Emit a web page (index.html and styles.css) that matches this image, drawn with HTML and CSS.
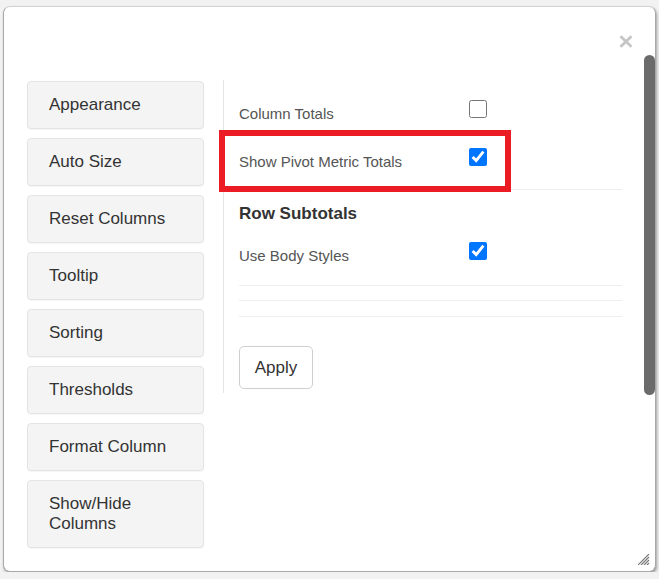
FILE: index.html
```html
<!DOCTYPE html>
<html>
<head>
<meta charset="utf-8">
<link rel="stylesheet" href="styles.css">
</head>
<body>
<div class="dialog">
  <div class="dialog-header">
    <button class="close" aria-label="Close">
      <svg width="14" height="13" viewBox="0 0 14 13"><path d="M1.5 1.2 L12.5 11.8 M12.5 1.2 L1.5 11.8" stroke="#c6c6c6" stroke-width="2.8" stroke-linecap="butt"/></svg>
    </button>
  </div>
  <div class="dialog-body">
    <nav class="sidebar">
      <button class="side-btn">Appearance</button>
      <button class="side-btn">Auto Size</button>
      <button class="side-btn">Reset Columns</button>
      <button class="side-btn">Tooltip</button>
      <button class="side-btn">Sorting</button>
      <button class="side-btn">Thresholds</button>
      <button class="side-btn">Format Column</button>
      <button class="side-btn">Show/Hide<br>Columns</button>
    </nav>
    <section class="panel">
      <div class="opt">
        <span class="opt-label">Column Totals</span>
        <input type="checkbox" class="chk">
      </div>
      <div class="opt opt-last">
        <span class="opt-label">Show Pivot Metric Totals</span>
        <input type="checkbox" class="chk" checked>
      </div>
      <div class="group">
        <h3 class="group-title">Row Subtotals</h3>
        <div class="opt opt-body">
          <span class="opt-label">Use Body Styles</span>
          <input type="checkbox" class="chk" checked>
        </div>
      </div>
      <div class="sep"></div>
      <div class="sep"></div>
      <div class="sep sep-end"></div>
      <button class="apply">Apply</button>
      <div class="highlight"></div>
    </section>
  </div>
  <div class="scroll-thumb"></div>
  <svg class="grip" width="12" height="11" viewBox="0 0 12 11">
    <path d="M11 0 L0 11 M11 3 L3 11 M11 6 L6 11 M11 9 L9 11" stroke="#7a7a7a" stroke-width="1.2"/>
  </svg>
</div>
</body>
</html>
```

FILE: styles.css
```css
html, body {
  margin: 0;
  padding: 0;
  background: #f2f2f2;
}

body {
  font-family: "Liberation Sans", Arial, sans-serif;
  color: #333;
  padding: 6px 0 0 3px;
}

.dialog {
  position: relative;
  box-sizing: border-box;
  width: 653px;
  height: 566px;
  background: #fff;
  border: 1px solid #a8a8a8;
  border-top-color: #d2d2d2;
  border-radius: 7px;
  box-shadow: 1px 2px 3px rgba(0, 0, 0, 0.35);
}

.dialog-header {
  display: flex;
  justify-content: flex-end;
  padding: 28px 22px 0 0;
  height: 45px;
}

.close {
  border: 0;
  background: none;
  padding: 0;
  width: 14px;
  height: 13px;
  display: block;
}

.close svg {
  display: block;
}

.dialog-body {
  display: flex;
  align-items: flex-start;
  padding-left: 23px;
}

.sidebar {
  width: 177px;
  display: flex;
  flex-direction: column;
  gap: 9px;
  margin-top: 1px;
}

.side-btn {
  box-sizing: border-box;
  width: 177px;
  text-align: left;
  font-family: "Liberation Sans", Arial, sans-serif;
  font-size: 17px;
  line-height: 20px;
  color: #333;
  background: #f4f4f4;
  border: 1px solid #e4e4e4;
  border-radius: 4px;
  padding: 13px 21px;
  box-shadow: 0 1px 1px rgba(0, 0, 0, 0.04);
}

.panel {
  position: relative;
  margin-left: 19px;
  width: 383px;
  border-left: 1px solid #e4e4e4;
  padding: 16px 0 4px 15px;
}

.opt {
  display: flex;
  align-items: flex-start;
  height: 45px;
  margin-bottom: 3px;
}

.opt-last {
  margin-bottom: 0;
}

.opt-label {
  width: 230px;
  margin-top: 9px;
  font-size: 15px;
  line-height: 18px;
  color: #555;
}

.chk {
  width: 18px;
  height: 18px;
  margin: 4px 0 0 0;
}

.group {
  border-top: 1px solid #eeeeee;
}

.group-title {
  margin: 14px 0 14px 0;
  font-size: 17px;
  line-height: 20px;
  font-weight: bold;
  color: #333;
}

.opt-body {
  height: 47px;
  margin-bottom: 0;
}

.sep {
  border-top: 1px solid #eeeeee;
  height: 14px;
}

.sep + .sep {
  height: 15px;
}

.sep-end {
  height: 29px !important;
}

.apply {
  display: block;
  box-sizing: border-box;
  width: 74px;
  height: 43px;
  font-family: "Liberation Sans", Arial, sans-serif;
  font-size: 17px;
  color: #333;
  background: #fff;
  border: 1px solid #cfcfcf;
  border-radius: 5px;
  padding: 0;
}

.highlight {
  position: absolute;
  left: -5px;
  top: 50px;
  width: 292px;
  height: 62px;
  box-sizing: border-box;
  border: 6px solid #ec1c24;
}

.scroll-thumb {
  position: absolute;
  right: 0;
  top: 48px;
  width: 11px;
  height: 340px;
  background: #6b6b6b;
  border-radius: 6px;
}

.grip {
  position: absolute;
  right: 5px;
  bottom: 6px;
}
```
